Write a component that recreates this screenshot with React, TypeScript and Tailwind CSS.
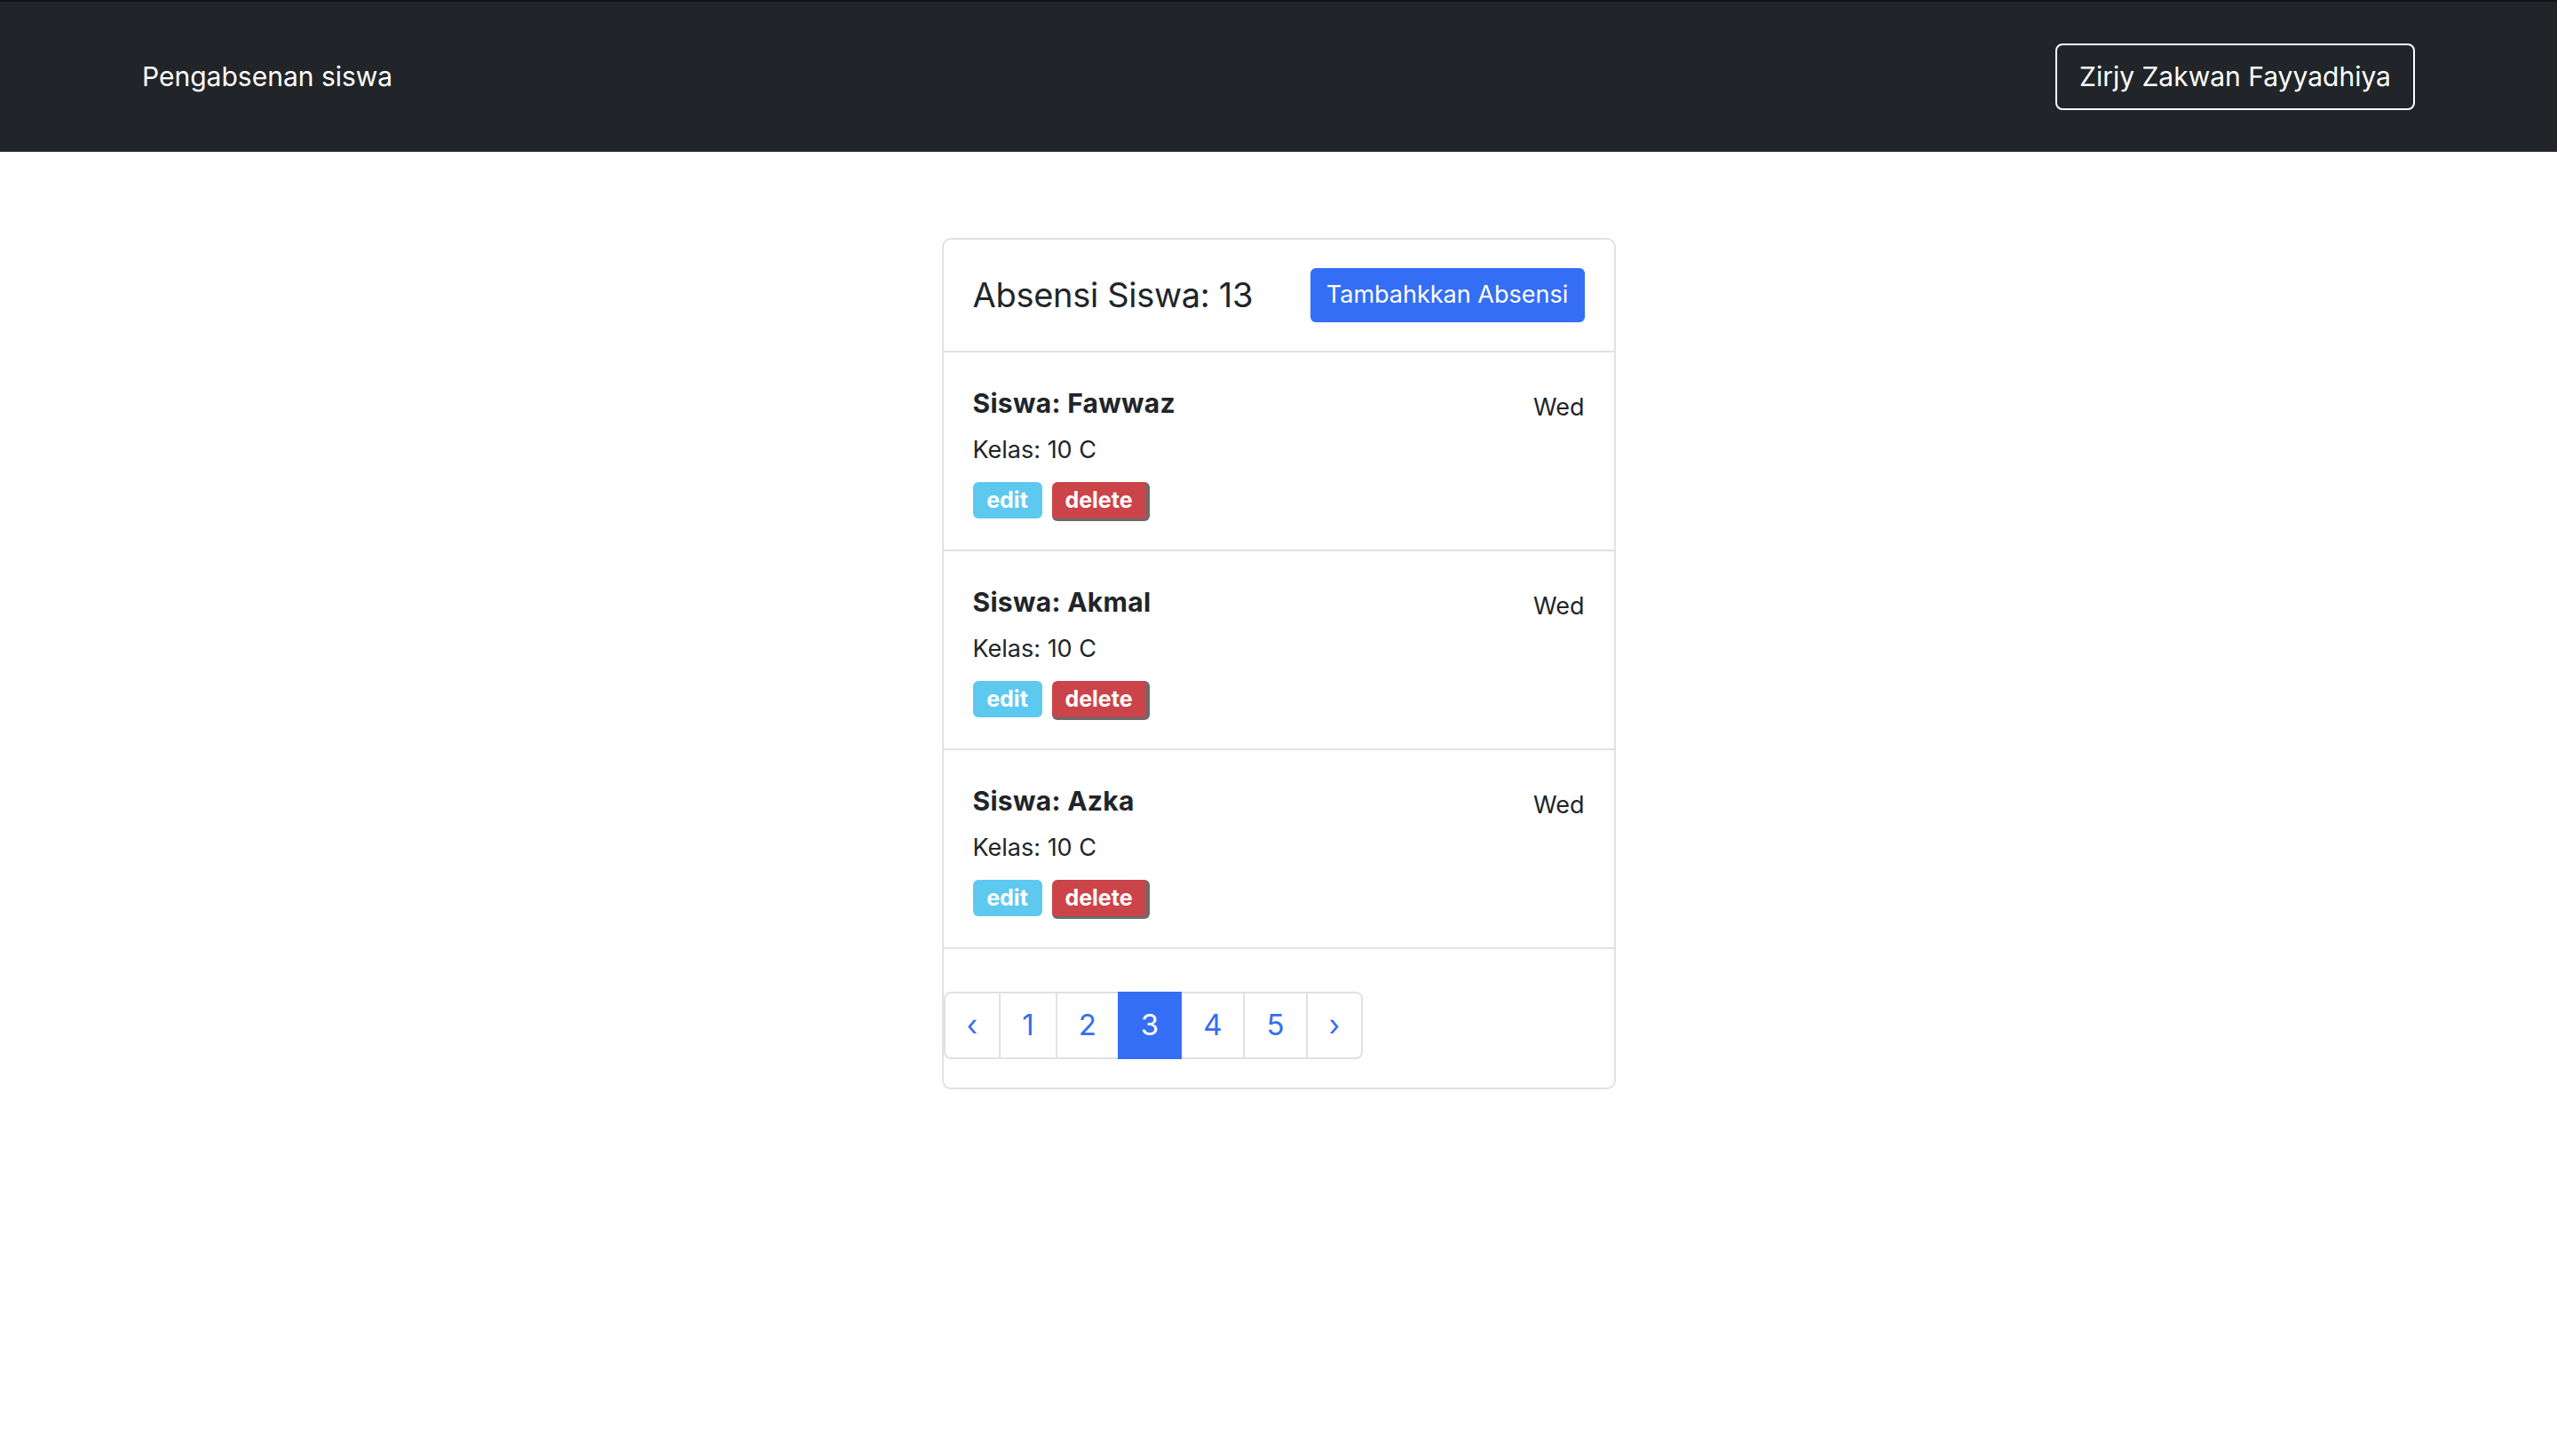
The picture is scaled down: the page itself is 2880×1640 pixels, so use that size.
import React from "react";

const absensi = [
  { id: 1, nama: "Fawwaz", kelas: "10 C", hari: "Wed" },
  { id: 2, nama: "Akmal", kelas: "10 C", hari: "Wed" },
  { id: 3, nama: "Azka", kelas: "10 C", hari: "Wed" },
];

const pages = ["‹", "1", "2", "3", "4", "5", "›"];
const activePage = "3";

function AbsensiItem({ item }: { item: (typeof absensi)[number] }) {
  return (
    <div className="flex items-start justify-between border-b-2 border-[#dee2e6] px-[33px] pt-[39px] pb-[32px]">
      <div>
        <h5 className="text-[30px] leading-[36px] font-bold tracking-[0.3px] text-[#212529]">Siswa: {item.nama}</h5>
        <p className="mt-[18px] text-[27px] leading-[34px] text-[#212529]">Kelas: {item.kelas}</p>
        <div className="mt-[19px] flex items-start gap-[11px]">
          <button className="h-[41px] w-[78px] rounded-[6px] bg-[#5ec9ee] text-[25px] font-bold text-white">
            edit
          </button>
          <button className="h-[44px] w-[110px] rounded-[6px] border-r-[4px] border-b-[3px] border-[#6b6b6b] bg-[#cb444a] text-[25px] font-bold text-white">
            delete
          </button>
        </div>
      </div>
      <span className="mt-[6px] text-[27px] leading-[34px] text-[#212529]">{item.hari}</span>
    </div>
  );
}

export default function App() {
  return (
    <div className="min-h-screen bg-white font-['Inter','Liberation_Sans',sans-serif]">
      <nav className="flex h-[171px] items-center justify-between border-t-2 border-[#111315] bg-[#212529] px-[160px]">
        <span className="text-[30px] text-white">Pengabsenan siswa</span>
        <button className="h-[75px] w-[405px] rounded-[8px] border-2 border-white text-[30px] text-white">
          Zirjy Zakwan Fayyadhiya
        </button>
      </nav>

      <main className="pt-[97px]">
        <div className="mx-auto w-[759px] rounded-[10px] border-2 border-[#dee2e6]">
          <div className="flex h-[127px] items-center justify-between border-b-2 border-[#dee2e6] px-[33px]">
            <h2 className="text-[38px] tracking-[-0.3px] text-[#212529]">Absensi Siswa: 13</h2>
            <button className="h-[61px] w-[309px] rounded-[6px] bg-[#346ef4] text-[27px] text-white">
              Tambahkkan Absensi
            </button>
          </div>

          {absensi.map((item) => (
            <AbsensiItem key={item.id} item={item} />
          ))}

          <div className="pt-[48px] pb-[32px]">
            <ul className="flex">
              {pages.map((p, i) => (
                <li
                  key={p}
                  className={
                    "flex h-[76px] items-center justify-center border-2 px-[24px] text-[33px] " +
                    (i > 0 ? "-ml-[2px] " : "") +
                    (i === 0 ? "rounded-l-[8px] " : "") +
                    (i === pages.length - 1 ? "rounded-r-[8px] " : "") +
                    (p === activePage
                      ? "relative z-10 border-[#346ef4] bg-[#346ef4] text-white"
                      : "border-[#dee2e6] text-[#346ef4]")
                  }
                >
                  {p}
                </li>
              ))}
            </ul>
          </div>
        </div>
      </main>
    </div>
  );
}
